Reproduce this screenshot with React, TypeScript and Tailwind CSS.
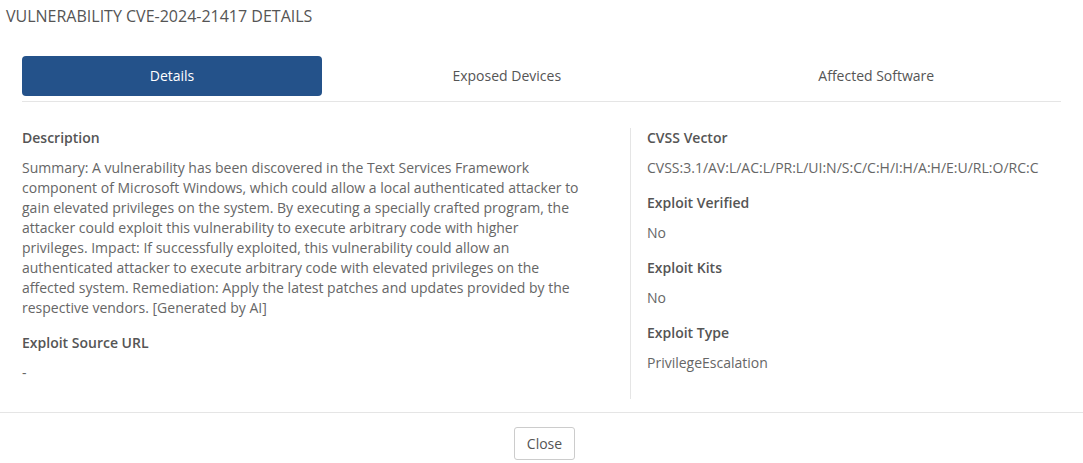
import React from "react";

const Field = ({ label, children, last }: { label: string; children: React.ReactNode; last?: boolean }) => (
  <div className={last ? "" : "mb-[15px]"}>
    <div className="font-semibold text-[#555] leading-[20px] mb-[10px]">{label}</div>
    <div className="text-[#666] leading-[20px]">{children}</div>
  </div>
);

export default function App() {
  return (
    <div className="w-[1083px] h-[463px] bg-white text-[14px] overflow-hidden" style={{ fontFamily: '"Open Sans", sans-serif' }}>
      <div className="px-[6px] pt-[5px] h-[56px] text-[16px] leading-[22px] text-[#555] uppercase">
        Vulnerability CVE-2024-21417 Details
      </div>
      <div className="mx-[22px] border-b border-[#e5e5e5] pb-[5px] flex">
        <div className="w-[300px] h-[40px] pb-[1px] rounded-[4px] bg-[#24528a] text-white flex items-center justify-center">Details</div>
        <div className="flex-1 h-[40px] pb-[1px] text-[#555] flex items-center justify-center">Exposed Devices</div>
        <div className="flex-1 h-[40px] pb-[1px] text-[#555] flex items-center justify-center">Affected Software</div>
      </div>
      <div className="flex mx-[22px] pt-[26px] pb-[13px]">
        <div className="w-[593px] pr-[33px] pb-[16px]">
          <Field label="Description">
            Summary: A vulnerability has been discovered in the Text Services Framework component of Microsoft Windows, which could allow a local authenticated attacker to gain elevated privileges on the system. By executing a specially crafted program, the attacker could exploit this vulnerability to execute arbitrary code with higher privileges. Impact: If successfully exploited, this vulnerability could allow an authenticated attacker to execute arbitrary code with elevated privileges on the affected system. Remediation: Apply the latest patches and updates provided by the respective vendors. [Generated by AI]
          </Field>
          <Field label="Exploit Source URL" last>
            -
          </Field>
        </div>
        <div className="ml-[15px] border-l border-[#e5e5e5] pl-[16px] flex-1">
          <Field label="CVSS Vector">CVSS:3.1/AV:L/AC:L/PR:L/UI:N/S:C/C:H/I:H/A:H/E:U/RL:O/RC:C</Field>
          <Field label="Exploit Verified">No</Field>
          <Field label="Exploit Kits">No</Field>
          <Field label="Exploit Type" last>PrivilegeEscalation</Field>
        </div>
      </div>
      <div className="border-t border-[#e5e5e5] flex justify-center pt-[14px] pl-[6px]">
        <button className="h-[33px] px-[12px] border border-[#ccc] rounded-[3px] text-[#555] bg-white leading-[20px]">Close</button>
      </div>
    </div>
  );
}
